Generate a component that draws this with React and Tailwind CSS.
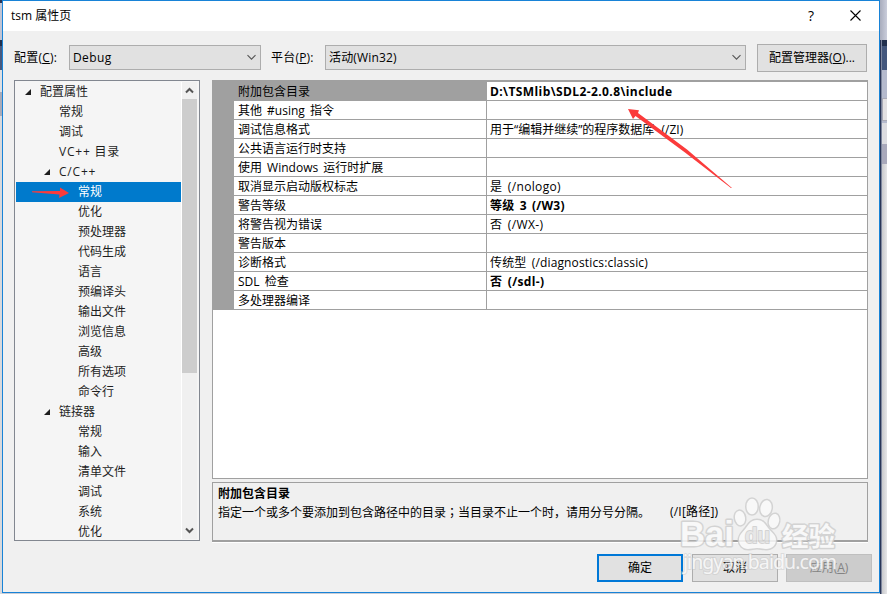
import React, { useState } from 'react';
import clsx from 'clsx';

const treeItems = [
    { id: 'root', label: '配置属性', level: 0, open: true },
    { id: 'general', label: '常规', level: 1 },
    { id: 'debug', label: '调试', level: 1 },
    { id: 'vcdirs', label: 'VC++ 目录', level: 1, latin: true },
    { id: 'cpp', label: 'C/C++', level: 1, open: true, latin: true },
    { id: 'cpp-general', label: '常规', level: 2 },
    { id: 'cpp-opt', label: '优化', level: 2 },
    { id: 'cpp-pre', label: '预处理器', level: 2 },
    { id: 'cpp-codegen', label: '代码生成', level: 2 },
    { id: 'cpp-lang', label: '语言', level: 2 },
    { id: 'cpp-pch', label: '预编译头', level: 2 },
    { id: 'cpp-output', label: '输出文件', level: 2 },
    { id: 'cpp-browse', label: '浏览信息', level: 2 },
    { id: 'cpp-advanced', label: '高级', level: 2 },
    { id: 'cpp-all', label: '所有选项', level: 2 },
    { id: 'cpp-cmd', label: '命令行', level: 2 },
    { id: 'linker', label: '链接器', level: 1, open: true },
    { id: 'linker-general', label: '常规', level: 2 },
    { id: 'linker-input', label: '输入', level: 2 },
    { id: 'linker-manifest', label: '清单文件', level: 2 },
    { id: 'linker-debug', label: '调试', level: 2 },
    { id: 'linker-system', label: '系统', level: 2 },
    { id: 'linker-opt', label: '优化', level: 2 },
];

const properties = [
    { name: '附加包含目录', value: 'D:\\TSMlib\\SDL2-2.0.8\\include', bold: true, spacing: 'tracking-[0.4px]' },
    { name: '其他 #using 指令', value: '' },
    { name: '调试信息格式', value: '用于“编辑并继续”的程序数据库 (/ZI)', spacing: '[word-spacing:4px]' },
    { name: '公共语言运行时支持', value: '' },
    { name: '使用 Windows 运行时扩展', value: '' },
    { name: '取消显示启动版权标志', value: '是 (/nologo)', spacing: 'tracking-[0.35px]' },
    { name: '警告等级', value: '等级 3 (/W3)', bold: true, spacing: 'tracking-[0.2px]' },
    { name: '将警告视为错误', value: '否 (/WX-)', spacing: 'tracking-[0.35px]' },
    { name: '警告版本', value: '' },
    { name: '诊断格式', value: '传统型 (/diagnostics:classic)', spacing: 'tracking-[0.15px]' },
    { name: 'SDL 检查', value: '否 (/sdl-)', bold: true, spacing: 'tracking-[0.35px]' },
    { name: '多处理器编译', value: '' },
];

const indent = ['pl-[7px]', 'pl-[26px]', 'pl-[45px]'];

const Select = ({ value, className }) => (
    <button
        type="button"
        className={clsx('flex h-[25px] items-center justify-between border border-[#adadad] bg-[#e1e1e1] pl-[3px] pr-[3px]', className)}
    >
        <span>{value}</span>
        <svg width="11" height="7" viewBox="0 0 11 7" fill="none" stroke="#555" strokeWidth="1.1">
            <path d="M1.5 1.2 5.5 5.2 9.5 1.2" />
        </svg>
    </button>
);

const DialogButton = ({ children, className }) => (
    <button type="button" className={clsx('h-7 w-[86px]', className)}>
        {children}
    </button>
);

const Tree = () => {
    const [selected, setSelected] = useState('cpp-general');

    return (
        <div className="flex h-[461px] w-[186px] border border-[#828790] bg-[#f5f5f5] p-px">
            <ul className="min-w-0 flex-1 overflow-hidden">
                {treeItems.map((item) => (
                    <li
                        key={item.id}
                        onClick={() => setSelected(item.id)}
                        className={clsx(
                            'flex h-5 items-center whitespace-pre leading-5',
                            indent[item.level],
                            item.latin && 'tracking-[0.8px]',
                            selected === item.id ? 'bg-[#007acc] text-white' : 'text-[#1e1e1e]'
                        )}
                    >
                        <span className="w-[17px] shrink-0">
                            {item.open && (
                                <svg width="8" height="8" viewBox="0 0 8 8" fill="#1e1e1e" className="ml-[1px]">
                                    <path d="M7 1v6H1z" />
                                </svg>
                            )}
                        </span>
                        {item.label}
                    </li>
                ))}
            </ul>
            {/* Scrollbar */}
            <div className="flex w-[17px] flex-col border-x border-l-white border-r-[#f5f5f5] bg-[#f0f0f0]">
                <div className="flex h-[17px] items-center justify-center">
                    <svg width="9" height="7" viewBox="0 0 9 7" fill="none" stroke="#555" strokeWidth="2">
                        <path d="M1 5.5 4.5 2 8 5.5" />
                    </svg>
                </div>
                <div className="h-[274px] bg-[#cdcdcd]"></div>
                <div className="mt-auto flex h-[17px] items-center justify-center">
                    <svg width="9" height="7" viewBox="0 0 9 7" fill="none" stroke="#555" strokeWidth="2">
                        <path d="M1 1.5 4.5 5 8 1.5" />
                    </svg>
                </div>
            </div>
        </div>
    );
};

const PropertyGrid = () => (
    <div className="h-[399px] w-[656px] border border-[#a0a0a0] bg-white">
        <div className="border-t border-[#a0a0a0]">
            {properties.map((prop, i) => (
                <div key={prop.name} className="flex h-[19px] whitespace-pre leading-5 [word-spacing:2px]">
                    <div className="w-[21px] bg-[#a0a0a0]"></div>
                    <div className={clsx('w-[253px] border-b border-r border-[#a0a0a0] pl-1', i === 0 && 'bg-[#a0a0a0]')}>
                        {prop.name}
                    </div>
                    <div className={clsx('flex-1 border-b border-[#a0a0a0] pl-[3px]', prop.bold && 'font-bold', prop.spacing)}>
                        {prop.value}
                    </div>
                </div>
            ))}
        </div>
    </div>
);

const Watermark = () => (
    <svg className="pointer-events-none absolute left-[670px] top-[490px]" width="180" height="96" viewBox="0 0 180 96">
        <g fill="#fafafa" stroke="#cfcfcf" strokeWidth="3" strokeLinejoin="round" paintOrder="stroke" opacity="0.85">
            <text x="10" y="56" fontSize="35" fontWeight="700" textLength="54" lengthAdjust="spacingAndGlyphs" fontFamily="Liberation Sans, sans-serif">Bai</text>
            <ellipse cx="70" cy="28" rx="5" ry="7.2" transform="rotate(-10 70 28)" />
            <ellipse cx="82" cy="16.500" rx="5.5" ry="7.8" />
            <ellipse cx="96" cy="18" rx="5.5" ry="7.8" transform="rotate(10 96 18)" />
            <ellipse cx="104" cy="31" rx="5" ry="7.2" transform="rotate(14 104 31)" />
            <path d="M87 30c-6 0-8 4-11 8-4 5-7 7-7 12 0 5 4 9 9 9 3 0 6-1 9-1s6 1 9 1c6 0 10-4 10-9 0-5-4-7-8-12-3-4-5-8-11-8z" />
            <text x="112" y="56" fontSize="26" fontWeight="700" textLength="53" lengthAdjust="spacingAndGlyphs" fontFamily="Noto Sans CJK SC, sans-serif">经验</text>
            <text x="75" y="53" fontSize="22" fontWeight="700" textLength="25" lengthAdjust="spacingAndGlyphs" fontFamily="Liberation Sans, sans-serif" fill="#e6e6e6" strokeWidth="2">du</text>
        </g>
        <text x="13" y="79" fontSize="19.500" textLength="154" fontFamily="Noto Sans, sans-serif" fill="#fff" fillOpacity="0.8" stroke="#c4c4c4" strokeOpacity="0.45" strokeWidth="2" paintOrder="stroke">jingyan.baidu.com</text>
    </svg>
);

const App = () => (
    <div className="relative flex h-[594px] w-[887px] overflow-hidden bg-[#c9cdd6] font-['Open_Sans','Noto_Sans_CJK_SC',sans-serif] text-[12px] text-black">
        {/* Window behind, left edge */}
        <div className="flex w-[2px] flex-col bg-[#d8d9dc]">
            <div className="h-[3px] bg-[#2a3556]"></div>
            <div className="h-[37px] bg-[#c0c4d4]"></div>
            <div className="h-1.5 bg-[#22304d]"></div>
            <div className="h-6 bg-[#46597f]"></div>
            <div className="h-[22px] bg-[#dedfe2]"></div>
            <div className="h-6 bg-[#a9abb8]"></div>
        </div>

        <div className="flex h-[593px] w-[878px] flex-col border border-[#1883d7] bg-[#f0f0f0]">
            <div className="flex h-[30px] items-center bg-white pl-2">
                <span className="flex-1">tsm 属性页</span>
                <span className="mr-[34px] w-2.5 pb-[2px] text-center text-[14px]">?</span>
                <svg width="11" height="11" viewBox="0 0 11 11" stroke="#000" strokeWidth="1.1" className="mb-px mr-[18px]">
                    <path d="M.5.5l10 10M10.5.5l-10 10" />
                </svg>
            </div>

            <div className="flex h-[49px] items-center pl-[11px] pt-[4px]">
                <label className="w-[55px] whitespace-nowrap tracking-[0.2px]">配置(<u>C</u>):</label>
                <Select value="Debug" className="w-[192px] tracking-[0.4px]" />
                <label className="ml-[10px] w-[54px] whitespace-nowrap tracking-[0.2px]">平台(<u>P</u>):</label>
                <Select value="活动(Win32)" className="w-[421px] tracking-[0.15px]" />
                <button type="button" className="ml-[11px] h-7 w-[110px] whitespace-nowrap border border-[#adadad] bg-[#e1e1e1]">
                    配置管理器(<u>O</u>)...
                </button>
            </div>

            <div className="flex gap-3 pl-[11px]">
                <Tree />
                <div className="flex flex-col gap-[3px]">
                    <PropertyGrid />
                    <div className="h-[60px] w-[656px] border border-b-2 border-[#a0a0a0] pl-[5px] pt-[2px] leading-[18px] shadow-[0_1px_0_#fff]">
                        <div className="font-bold">附加包含目录</div>
                        <div className="flex whitespace-nowrap">
                            <span className="w-[452px]">
                                指定一个或多个要添加到包含路径中的目录
                                <span lang="zh-Hant" className="font-['Noto_Sans_CJK_TC',sans-serif]">；</span>
                                当目录不止一个时，请用分号分隔。
                            </span>
                            <span className="tracking-[0.2px]">(/I[路径])</span>
                        </div>
                    </div>
                </div>
            </div>

            <div className="mt-3 flex justify-end pr-[7px]">
                <DialogButton className="mr-[9px] border-2 border-[#0078d7] bg-[#e1e1e1]">确定</DialogButton>
                <DialogButton className="mr-2 border border-[#adadad] bg-[#e1e1e1]">取消</DialogButton>
                <DialogButton className="border border-[#bfbfbf] bg-[#ccc] text-[#838383]">应用(<u>A</u>)</DialogButton>
            </div>
        </div>

        {/* Window behind, right edge */}
        <div className="flex w-[7px] flex-col">
            <div className="h-10 bg-gradient-to-r from-[#a9adbd] to-[#cacddb]"></div>
            <div className="flex h-[554px]">
                <div className="w-px bg-[#2a3556]"></div>
                <div className="w-px bg-[#7f889f]"></div>
                <div className="flex flex-1 flex-col bg-gradient-to-r from-[#c9c9cc] to-[#e6e6e8]">
                    <div className="h-1.5 bg-[#22304d]"></div>
                    <div className="h-6 bg-[#43567c]"></div>
                    <div className="h-7 bg-[#b5bacd]"></div>
                    <div className="h-[23px] border-y border-l border-[#aaaab5] bg-[#e3e1e2]"></div>
                    <div className="h-[2px] bg-[#b5bacd]"></div>
                    <div className="h-[21px] bg-[#dcdce0]"></div>
                    <div className="h-5 bg-[#a9a9bb]"></div>
                </div>
            </div>
        </div>

        <Watermark />

        {/* Red callout arrows */}
        <svg className="pointer-events-none absolute left-[31px] top-[186px]" width="39" height="14" viewBox="0 0 39 14" fill="#fb3b3b">
            <path d="M1 5.2 29 5 29 1.5 38 7 28 12 28.500 8.500 1 6.200z" />
        </svg>
        <svg className="pointer-events-none absolute left-[627px] top-[108px]" width="106" height="81" viewBox="0 0 106 81" fill="#fb3b3b">
            <path d="M1 1 12 2.200 11 5 60 41.500 105 80 104 80 58 44.500 8.500 8 6 11z" />
        </svg>
    </div>
);

export default App;
